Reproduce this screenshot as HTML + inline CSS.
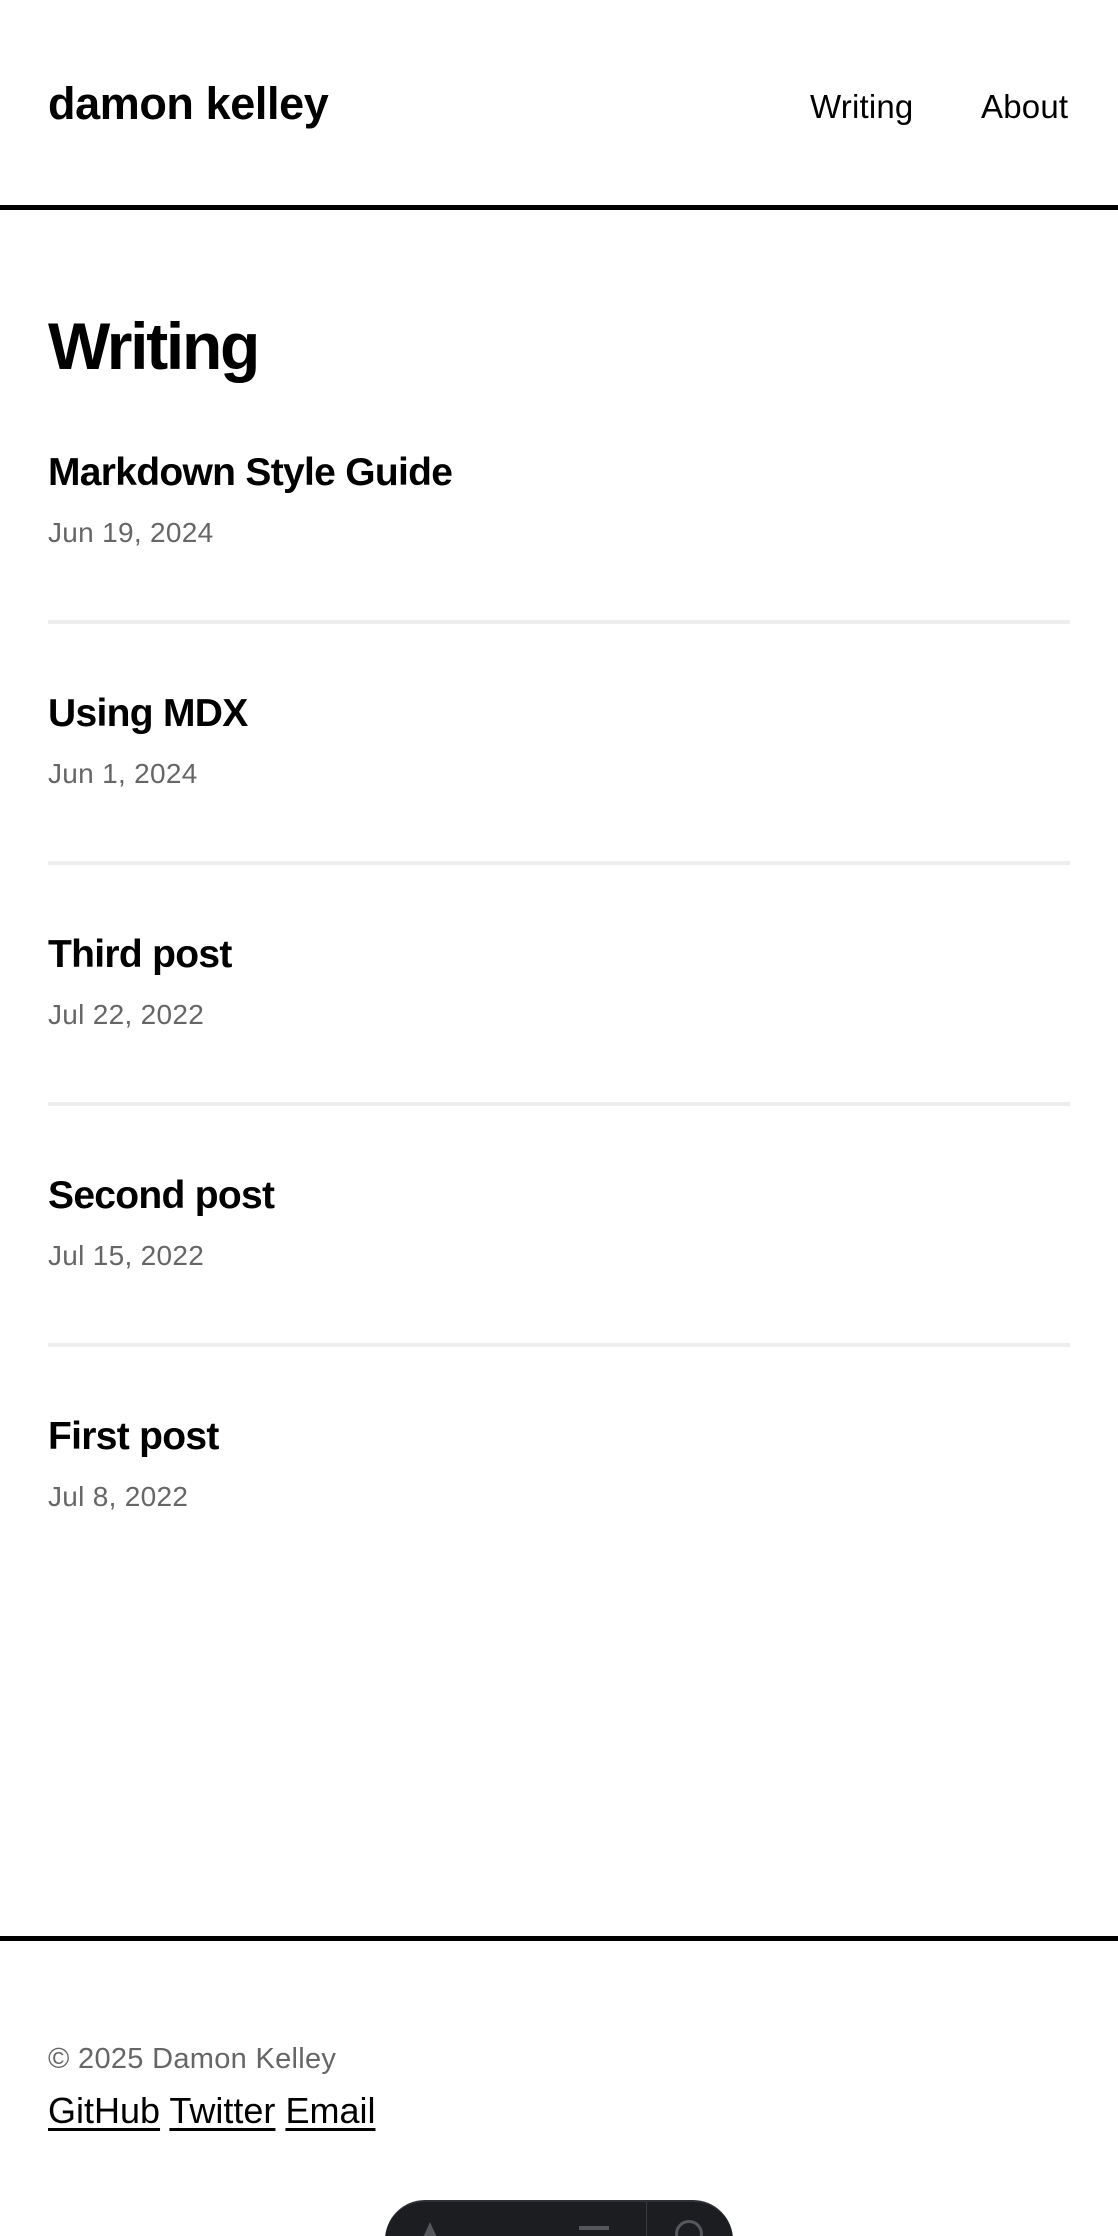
<!DOCTYPE html>
<html><head><meta charset="utf-8"><style>
html,body{margin:0;padding:0;background:#fff;width:1118px;height:2236px;overflow:hidden;position:relative;font-family:"Liberation Sans",Arial,sans-serif;color:#000}
.a{position:absolute;white-space:nowrap;line-height:1}
.logo{left:48px;top:81px;font-size:45px;font-weight:bold;letter-spacing:-0.4px}
.nav{top:90px;font-size:33px;letter-spacing:0.2px}
.bar{position:absolute;left:0;width:1118px;height:5px;background:#000}
h1{position:absolute;margin:0;left:48px;top:313px;font-size:66px;font-weight:bold;letter-spacing:-2.3px;line-height:1}
.t{left:48px;font-size:39px;font-weight:bold;letter-spacing:-0.7px}
.d{left:48px;font-size:28px;color:#666;letter-spacing:0.3px}
.hr{position:absolute;left:48px;width:1022px;height:4px;background:#eee}
.links a{color:#000;text-decoration:underline;text-decoration-thickness:3px;text-underline-offset:5px}
</style></head><body>
<div class="a logo">damon kelley</div>
<div class="a nav" style="left:810px">Writing</div>
<div class="a nav" style="left:981px">About</div>
<div class="bar" style="top:205px"></div>
<h1>Writing</h1>

<div class="a t" style="top:453px">Markdown Style Guide</div>
<div class="a d" style="top:519px">Jun 19, 2024</div>
<div class="hr" style="top:620px"></div>

<div class="a t" style="top:694px">Using MDX</div>
<div class="a d" style="top:760px">Jun 1, 2024</div>
<div class="hr" style="top:861px"></div>

<div class="a t" style="top:935px">Third post</div>
<div class="a d" style="top:1001px">Jul 22, 2022</div>
<div class="hr" style="top:1102px"></div>

<div class="a t" style="top:1176px">Second post</div>
<div class="a d" style="top:1242px">Jul 15, 2022</div>
<div class="hr" style="top:1343px"></div>

<div class="a t" style="top:1417px">First post</div>
<div class="a d" style="top:1483px">Jul 8, 2022</div>

<div class="bar" style="top:1936px"></div>
<div class="a d" style="top:2045px;font-size:29px">© 2025 Damon Kelley</div>
<div class="a links" style="left:48px;top:2093px;font-size:36px;letter-spacing:0"><a>GitHub</a> <a>Twitter</a> <a>Email</a></div>

<div style="position:absolute;left:385px;top:2200px;width:348px;height:80px;background:#1c1d21;border-radius:40px;border-top:2px solid #2e3036;box-sizing:border-box">
<div style="position:absolute;left:261px;top:0;width:1px;height:60px;background:#3a3c42"></div>
<div style="position:absolute;left:36px;top:20px;width:0;height:0;border-left:9px solid transparent;border-right:9px solid transparent;border-bottom:20px solid #55575d"></div>
<div style="position:absolute;left:194px;top:24px;width:30px;height:4px;background:#55575d"></div>
<div style="position:absolute;left:290px;top:18px;width:22px;height:22px;border:3px solid #55575d;border-radius:50%"></div>
</div>
</body></html>
